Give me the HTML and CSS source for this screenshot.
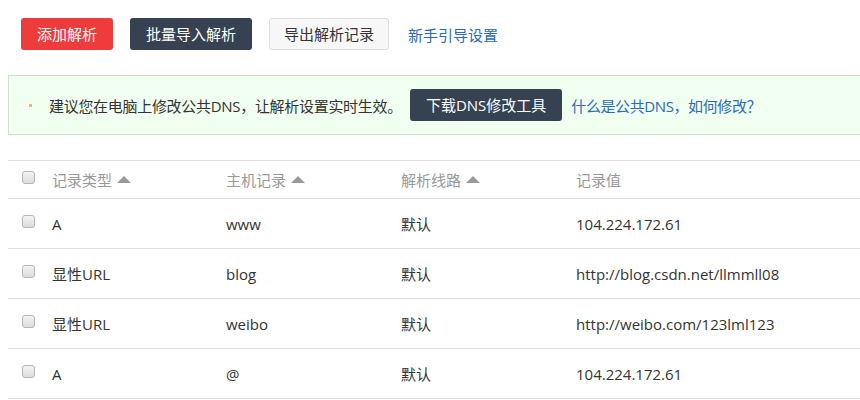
FILE: index.html
```html
<!DOCTYPE html>
<html lang="zh-CN">
<head>
    <meta charset="UTF-8">
    <title>域名解析</title>
    <link rel="stylesheet" href="styles.css">
</head>
<body>
    <div class="page">
        <div class="toolbar">
            <button class="btn btn-red">添加解析</button>
            <button class="btn btn-dark">批量导入解析</button>
            <button class="btn btn-light">导出解析记录</button>
            <a class="link" href="#">新手引导设置</a>
        </div>

        <div class="notice">
            <span class="dot"></span>
            <span class="notice-text">建议您在电脑上修改公共DNS，让解析设置实时生效。</span>
            <button class="btn btn-dark">下载DNS修改工具</button>
            <a class="link tight" href="#">什么是公共DNS，如何修改？</a>
        </div>

        <table class="records">
            <thead>
                <tr>
                    <th class="col-check"><span class="check"></span></th>
                    <th class="col-type">记录类型<span class="sort"></span></th>
                    <th class="col-host">主机记录<span class="sort"></span></th>
                    <th class="col-line">解析线路<span class="sort"></span></th>
                    <th>记录值</th>
                </tr>
            </thead>
            <tbody>
                <tr>
                    <td class="col-check"><span class="check"></span></td>
                    <td>A</td>
                    <td>www</td>
                    <td>默认</td>
                    <td>104.224.172.61</td>
                </tr>
                <tr>
                    <td class="col-check"><span class="check"></span></td>
                    <td>显性URL</td>
                    <td>blog</td>
                    <td>默认</td>
                    <td>http://blog.csdn.net/llmmll08</td>
                </tr>
                <tr>
                    <td class="col-check"><span class="check"></span></td>
                    <td>显性URL</td>
                    <td>weibo</td>
                    <td>默认</td>
                    <td>http://weibo.com/123lml123</td>
                </tr>
                <tr>
                    <td class="col-check"><span class="check"></span></td>
                    <td>A</td>
                    <td>@</td>
                    <td>默认</td>
                    <td>104.224.172.61</td>
                </tr>
            </tbody>
        </table>
    </div>
</body>
</html>
```

FILE: styles.css
```css
* {
    margin: 0;
    padding: 0;
    box-sizing: border-box;
}

body {
    font-family: "Open Sans", "Noto Sans CJK SC", sans-serif;
    font-size: 15px;
    color: #333;
    background: #fff;
    overflow: hidden;
}

.page {
    padding: 18px 0 0 8px;
}

.toolbar {
    display: flex;
    align-items: center;
    gap: 17px;
    padding-left: 13px;
}

.toolbar .link {
    margin-left: 2px;
}

.btn {
    height: 32px;
    padding: 0 15px;
    border: 1px solid transparent;
    border-radius: 3px;
    font-family: inherit;
    font-size: 15px;
    line-height: 30px;
    cursor: pointer;
}

.btn-red {
    background: #ee3b3b;
    color: #fff;
}

.btn-dark {
    background: #364152;
    color: #fff;
}

.btn-light {
    background: #f7f7f7;
    border-color: #dedede;
    color: #333;
    padding: 0 14px;
}

.link {
    color: #2c6ab4;
    text-decoration: none;
}

.notice {
    display: flex;
    align-items: center;
    height: 60px;
    margin: 25px -12px 0 0;
    padding-left: 20px;
    background: #f1fff0;
    border: 1px solid #d2dccf;
}

.dot {
    width: 3px;
    height: 3px;
    background: #e3c35a;
    margin-right: 17px;
}

.notice-text {
    margin-right: 8px;
    letter-spacing: -0.3px;
}

.notice .btn {
    margin-right: 9px;
}

.tight {
    letter-spacing: -0.4px;
}

.records {
    width: calc(100% + 12px);
    margin-top: 25px;
    border-collapse: collapse;
    border-top: 1px solid #ddd;
}

.records th,
.records td {
    text-align: left;
    border-bottom: 1px solid #ddd;
    vertical-align: middle;
    padding: 0;
}

.records th {
    height: 38px;
    font-weight: normal;
    color: #999;
}

.records td {
    height: 50px;
}

.col-check {
    width: 44px;
    padding-left: 14px !important;
}

.col-type {
    width: 174px;
}

.col-host {
    width: 175px;
}

.col-line {
    width: 175px;
}

.check {
    display: block;
    width: 13px;
    height: 13px;
    margin-top: -4px;
    border: 1px solid #b5b5b5;
    border-radius: 3px;
    background: linear-gradient(#f4f4f4, #dcdcdc);
}

.sort {
    display: inline-block;
    width: 0;
    height: 0;
    margin-left: 5px;
    vertical-align: 3px;
    border-left: 7px solid transparent;
    border-right: 7px solid transparent;
    border-bottom: 7px solid #999;
}
```
